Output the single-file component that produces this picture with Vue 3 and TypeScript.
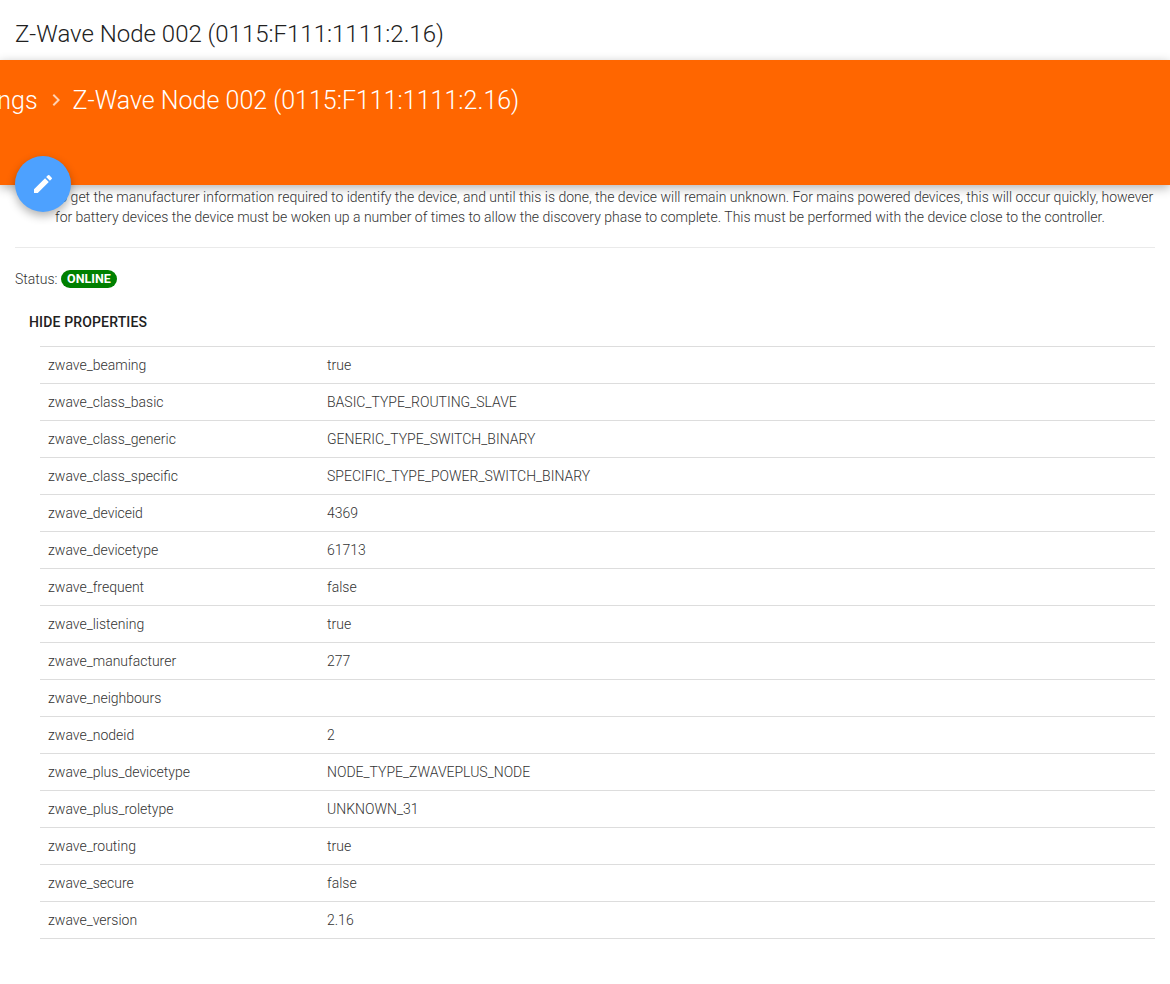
<script setup lang="ts">
const rows: [string, string][] = [
  ['zwave_beaming', 'true'],
  ['zwave_class_basic', 'BASIC_TYPE_ROUTING_SLAVE'],
  ['zwave_class_generic', 'GENERIC_TYPE_SWITCH_BINARY'],
  ['zwave_class_specific', 'SPECIFIC_TYPE_POWER_SWITCH_BINARY'],
  ['zwave_deviceid', '4369'],
  ['zwave_devicetype', '61713'],
  ['zwave_frequent', 'false'],
  ['zwave_listening', 'true'],
  ['zwave_manufacturer', '277'],
  ['zwave_neighbours', ''],
  ['zwave_nodeid', '2'],
  ['zwave_plus_devicetype', 'NODE_TYPE_ZWAVEPLUS_NODE'],
  ['zwave_plus_roletype', 'UNKNOWN_31'],
  ['zwave_routing', 'true'],
  ['zwave_secure', 'false'],
  ['zwave_version', '2.16'],
]
</script>

<template>
  <div class="page">
    <header class="topbar">Z-Wave Node 002 (0115:F111:1111:2.16)</header>
    <section class="hero">
      <div class="crumbs">
        <span class="crumb-prev">Things</span>
        <svg class="chevron" viewBox="0 0 24 24" width="24" height="24">
          <path d="M8.6 16.6 13.2 12 8.6 7.4 10 6l6 6-6 6z" fill="currentColor" />
        </svg>
        <span>Z-Wave Node 002 (0115:F111:1111:2.16)</span>
      </div>
      <button class="fab" type="button" aria-label="Edit">
        <svg viewBox="0 0 24 24" width="24" height="24">
          <path d="M3 17.25V21h3.75L17.81 9.94l-3.75-3.75L3 17.25zM20.71 7.04a1 1 0 0 0 0-1.41l-2.34-2.34a1 1 0 0 0-1.41 0l-1.83 1.83 3.75 3.75 1.83-1.83z" fill="#fff" />
        </svg>
      </button>
    </section>
    <main class="content">
      <p class="notice">
        to get the manufacturer information required to identify the device, and until this is done, the device will remain unknown. For mains powered devices, this will occur quickly, however for battery devices the device must be woken up a number of times to allow the discovery phase to complete. This must be performed with the device close to the controller.
      </p>
      <hr class="divider" />
      <div class="status">
        <span>Status:</span>
        <span class="badge">ONLINE</span>
      </div>
      <div class="toggle">HIDE PROPERTIES</div>
      <div class="props">
        <div v-for="[key, value] in rows" :key="key" class="prop">
          <div class="prop-key">{{ key }}</div>
          <div class="prop-value">{{ value }}</div>
        </div>
      </div>
    </main>
  </div>
</template>

<style>
html, body { margin: 0; background: #fff; }
</style>

<style scoped>
.page {
  width: 1170px;
  height: 984px;
  overflow: hidden;
  background: #fff;
  color: #333;
  font-family: Roboto, "Liberation Sans", sans-serif;
  font-size: 14px;
  font-weight: 300;
}
.topbar {
  height: 60px;
  box-sizing: border-box;
  padding: 8px 15px 0;
  display: flex;
  align-items: center;
  font-size: 24px;
  color: #212121;
}
.hero {
  position: relative;
  z-index: 1;
  height: 125px;
  background: #ff6600;
  color: #fff;
  box-shadow: 0 3px 10px rgba(0, 0, 0, 0.3);
}
.crumbs {
  display: flex;
  align-items: center;
  height: 80px;
  font-size: 25px;
  white-space: nowrap;
}
.crumb-prev { margin-left: -37px; }
.chevron { margin: 0 5px 0 6px; color: rgba(255, 255, 255, 0.7); flex: none; }
.fab {
  position: absolute;
  left: 15px;
  top: 96px;
  width: 56px;
  height: 56px;
  padding: 0;
  border: 0;
  border-radius: 50%;
  background: #4da1ff;
  display: flex;
  align-items: center;
  justify-content: center;
  box-shadow: 0 4px 10px rgba(0, 0, 0, 0.3);
}
.content { padding: 0 15px; }
.notice {
  margin: 2px 0 0 40px;
  line-height: 20px;
  letter-spacing: -0.005px;
}
.divider {
  margin: 20px 0 0;
  border: 0;
  border-top: 1px solid #eaeaea;
}
.status {
  margin-top: 22px;
  display: flex;
  align-items: center;
  gap: 3px;
  height: 18px;
}
.badge {
  box-sizing: border-box;
  height: 18px;
  padding: 0 6.5px;
  border-radius: 9px;
  background: #008000;
  color: #fff;
  font-size: 12.5px;
  font-weight: 700;
  line-height: 18px;
}
.toggle {
  margin: 26px 0 0 14px;
  height: 17px;
  line-height: 17px;
  font-weight: 500;
  letter-spacing: 0.15px;
  color: #212121;
}
.props {
  margin: 15px 0 0 25px;
  border-top: 1px solid #ddd;
}
.prop {
  display: flex;
  height: 36px;
  align-items: center;
  border-bottom: 1px solid #ddd;
}
.prop-key { width: 287px; padding-left: 8px; box-sizing: border-box; }
.prop-value { flex: 1; }
</style>
